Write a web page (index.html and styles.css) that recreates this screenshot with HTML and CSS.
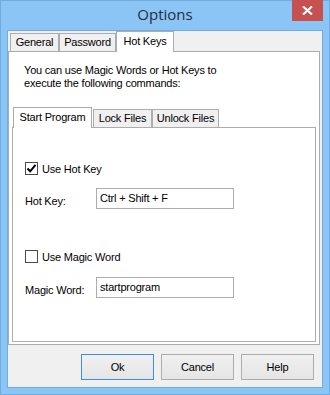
FILE: index.html
```html
<!DOCTYPE html>
<html lang="en">
<head>
    <meta charset="UTF-8">
    <title>Options</title>
    <link rel="stylesheet" href="styles.css">
</head>
<body>
    <div class="window">
        <div class="titlebar">
            <span></span>
            <span class="title">Options</span>
            <div class="close">
                <svg width="11" height="9" viewBox="0 0 11 9">
                    <path d="M1 0.5 L10 8.5 M10 0.5 L1 8.5" stroke="#fff" stroke-width="2.2" fill="none"/>
                </svg>
            </div>
        </div>
        <div class="client">
            <div class="tabs outer-tabs">
                <div class="tab t-general">General</div>
                <div class="tab t-password">Password</div>
                <div class="tab t-hotkeys active">Hot Keys</div>
            </div>
            <div class="panel outer">
                <p class="intro">You can use Magic Words or Hot Keys to<br>execute the following commands:</p>
                <div class="tabs inner-tabs">
                    <div class="tab t-start active">Start Program</div>
                    <div class="tab t-lock">Lock Files</div>
                    <div class="tab t-unlock">Unlock Files</div>
                </div>
                <div class="panel inner">
                    <div class="check-row">
                        <span class="checkbox">
                            <svg width="11" height="11" viewBox="0 0 11 11">
                                <path d="M1.5 5.5 L4.2 8.3 L9.5 1.8" stroke="#000" stroke-width="2" fill="none"/>
                            </svg>
                        </span>
                        <span>Use Hot Key</span>
                    </div>
                    <div class="field-row">
                        <span class="field-label">Hot Key:</span>
                        <div class="textbox">Ctrl + Shift + F</div>
                    </div>
                    <div class="check-row magic">
                        <span class="checkbox"></span>
                        <span>Use Magic Word</span>
                    </div>
                    <div class="field-row magic-field">
                        <span class="field-label">Magic Word:</span>
                        <div class="textbox">startprogram</div>
                    </div>
                </div>
            </div>
            <div class="buttons">
                <div class="btn default">Ok</div>
                <div class="btn">Cancel</div>
                <div class="btn">Help</div>
            </div>
        </div>
    </div>
</body>
</html>
```

FILE: styles.css
```css
body{
    margin: 0;
    padding: 0;
    font: normal 11px "Liberation Sans", Arial, sans-serif;
    letter-spacing: -0.2px;
    color: #000;
}
.window{
    width: 330px;
    height: 395px;
    box-sizing: border-box;
    background-color: #8bc5f6;
    border: 1px solid #72acdf;
    padding: 0 6px 6px 6px;
    display: flex;
    flex-direction: column;
}
.titlebar{
    height: 29px;
    display: grid;
    grid-template-columns: 1fr auto 1fr;
    align-items: start;
}
.title{
    font: normal 15px "Open Sans", "Noto Sans", sans-serif;
    letter-spacing: 0;
    color: #222e3a;
    line-height: 29px;
    margin-top: -1px;
}
.close{
    justify-self: end;
    width: 31px;
    height: 21px;
    margin-top: -1px;
    background-color: #c75050;
    display: flex;
    align-items: center;
    justify-content: center;
}
.client{
    flex: 1;
    background-color: #f0f0f0;
    border: 1px solid #72acdf;
    display: flex;
    flex-direction: column;
}

/* tabs */
.tabs{
    display: flex;
    align-items: flex-end;
    height: 20px;
}
.outer-tabs{
    padding-left: 2px;
}
.tab{
    box-sizing: border-box;
    height: 18px;
    border: 1px solid #acacac;
    border-bottom: none;
    background-color: #f0f0f0;
    text-align: center;
    line-height: 17px;
    white-space: nowrap;
}
.tab.active{
    height: 21px;
    margin-bottom: -1px;
    background-color: #fff;
    position: relative;
    z-index: 1;
    line-height: 19px;
}
.t-general{ width: 49px; }
.t-password{ width: 57px; }
.t-hotkeys{ width: 58px; }
.t-start{ width: 79px; }
.t-lock{ width: 59px; margin-left: 1px; }
.t-unlock{ width: 67px; }

.panel{
    box-sizing: border-box;
    background-color: #fff;
    border: 1px solid #acacac;
}
.outer{
    width: 312px;
    height: 294px;
    padding: 12px 3px 2px 3px;
    display: flex;
    flex-direction: column;
}
.intro{
    margin: 0 0 17px 12px;
    line-height: 13px;
}
.inner-tabs{
    padding-left: 1px;
}
.inner{
    flex: 1;
    padding: 34px 12px 0 12px;
}

/* rows */
.check-row{
    display: flex;
    align-items: center;
    height: 13px;
    gap: 4px;
}
.checkbox{
    box-sizing: border-box;
    width: 13px;
    height: 13px;
    border: 1px solid #4a4a4a;
    background-color: #fff;
    display: flex;
    align-items: center;
    justify-content: center;
}
.field-row{
    display: flex;
    margin-top: 13px;
}
.field-label{
    width: 71px;
    padding-top: 7px;
    line-height: 13px;
}
.textbox{
    box-sizing: border-box;
    width: 138px;
    height: 21px;
    border: 1px solid #abadb3;
    padding: 0 3px;
    line-height: 19px;
}
.check-row.magic{
    margin-top: 41px;
}
.magic-field{
    margin-top: 14px;
}

/* buttons */
.buttons{
    display: flex;
    justify-content: flex-end;
    gap: 7px;
    padding: 9px 8px 0 0;
}
.btn{
    box-sizing: border-box;
    width: 73px;
    height: 26px;
    border: 1px solid #acacac;
    background: linear-gradient(#f0f0f0, #e5e5e5);
    text-align: center;
    line-height: 24px;
}
.btn.default{
    border-color: #3c8fe8;
}
```
